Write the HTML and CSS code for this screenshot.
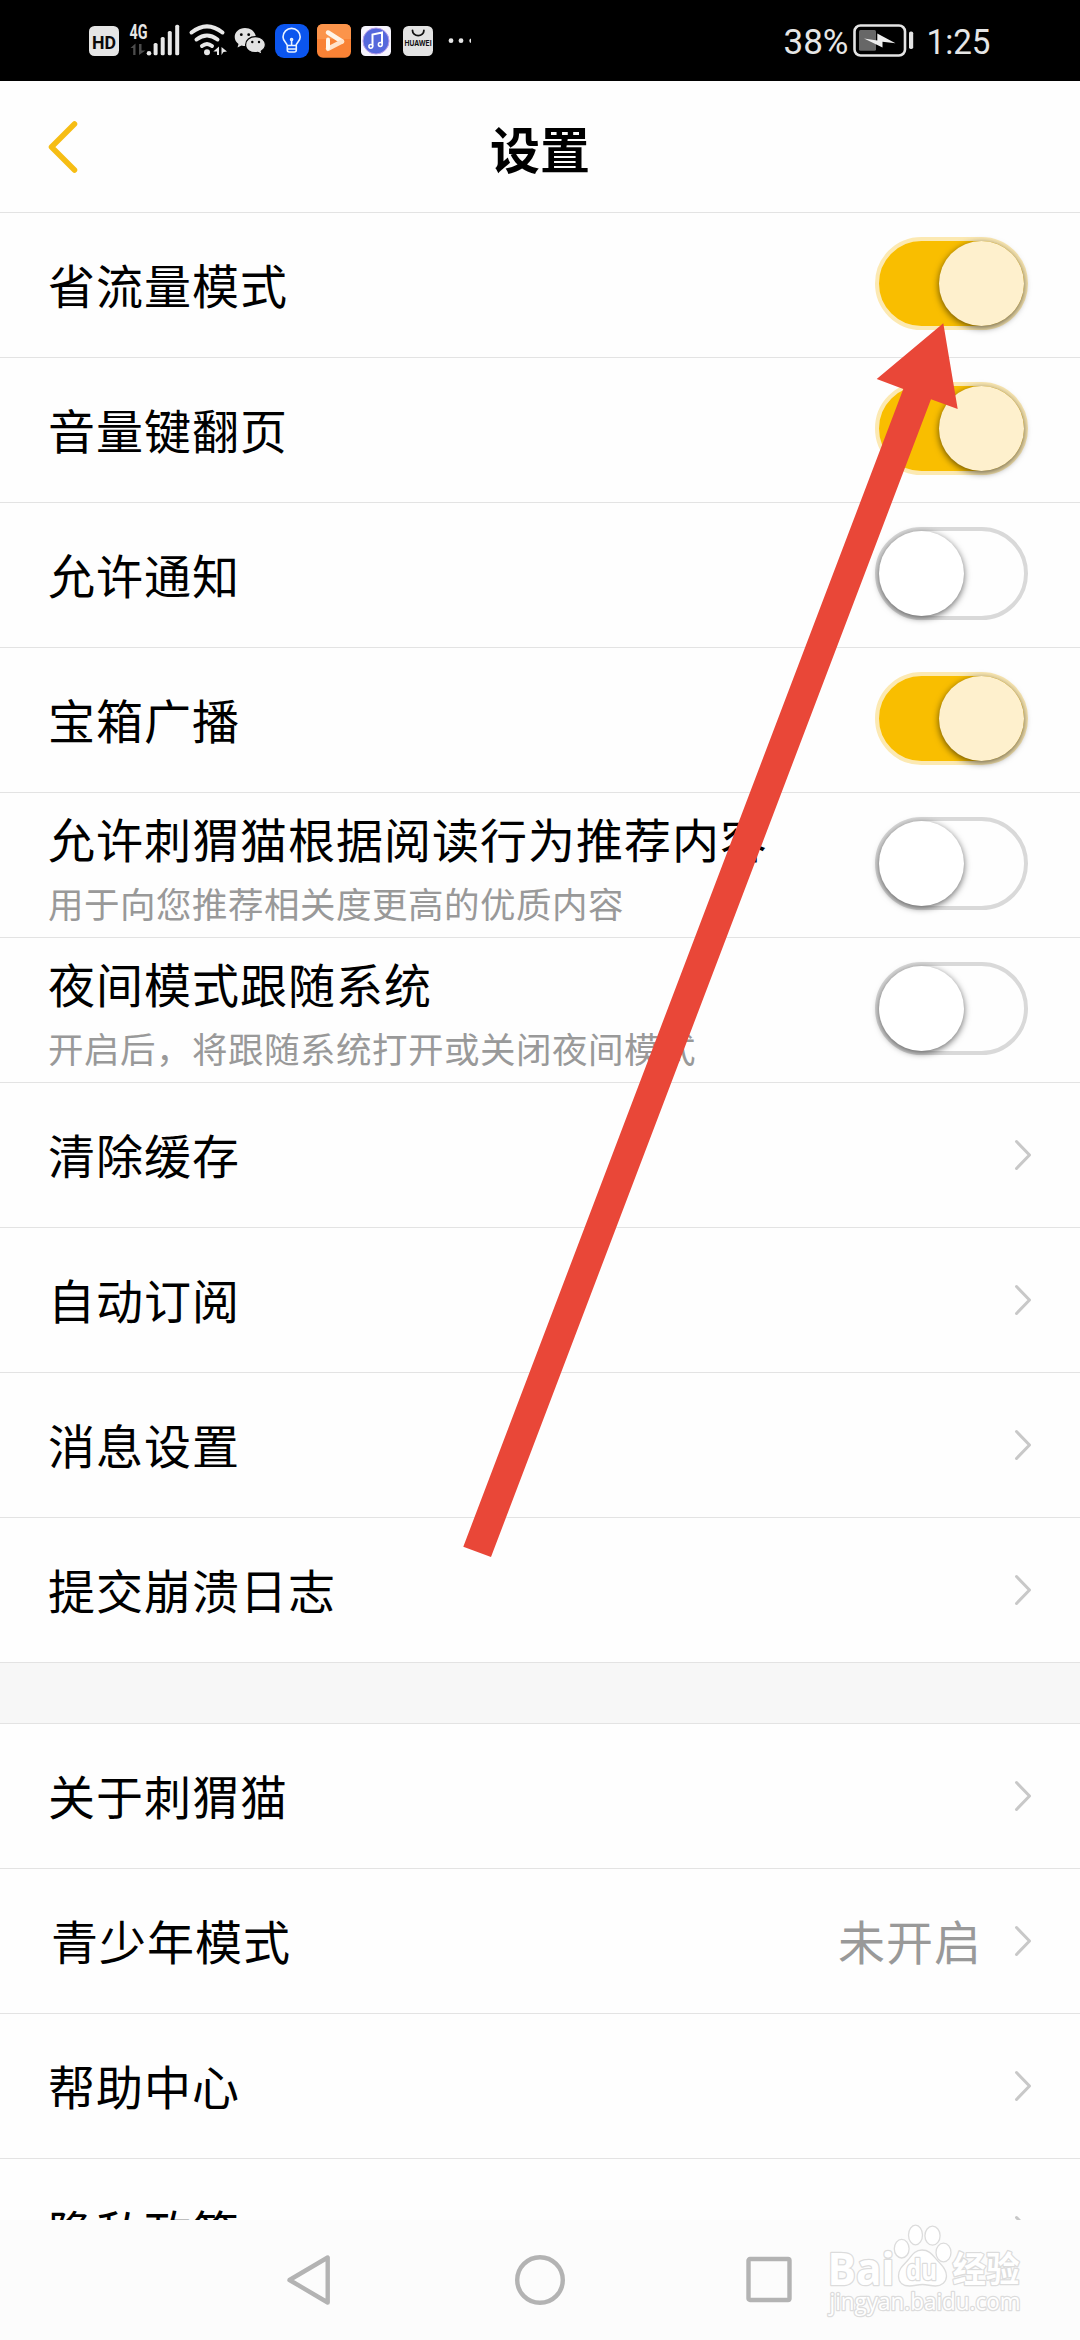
FILE: index.html
```html
<!DOCTYPE html>
<html lang="zh-CN">
<head>
<meta charset="utf-8">
<title>设置</title>
<link rel="stylesheet" href="styles.css">
</head>
<body>
<svg width="0" height="0" class="defs">
  <defs>
    <symbol id="chevron" viewBox="0 0 18 32"><path d="M2.5 2.500L15.500 16L2.500 29.500" fill="none" stroke="#c8c8c8" stroke-width="3" stroke-linecap="round" stroke-linejoin="round"/></symbol>
  </defs>
</svg>
<div class="screen">
  <div class="status">
    <svg class="status-icons" width="392" height="81" viewBox="80 0 392 81">
      <rect x="89" y="26" width="30" height="30" rx="5.500" fill="#e5e5e5"/>
      <text x="92" y="48.600" textLength="24" lengthAdjust="spacingAndGlyphs" class="hd">HD</text>
      <text x="129.500" y="38.700" textLength="18" lengthAdjust="spacingAndGlyphs" class="net">4G</text>
      <path d="M130.500 48L135.500 43.500V55H133.200V48ZM145.500 50.500L139 55V44H141.500V50.500Z" fill="#4c4c4c"/>
      <g fill="#e8e8e8">
        <circle cx="149" cy="53.200" r="2.300"/>
        <rect x="153.600" y="43" width="4" height="12.300" rx="1.600"/>
        <rect x="160.700" y="37" width="4" height="18.300" rx="1.600"/>
        <rect x="167.800" y="31" width="4" height="24.300" rx="1.600"/>
        <rect x="175.200" y="24.700" width="4" height="30.600" rx="1.600"/>
      </g>
      <g fill="none" stroke="#e8e8e8" stroke-width="4" stroke-linecap="round">
        <path d="M191.500 32.500Q207 20.200 222.500 32.500"/>
        <path d="M196.500 39.500Q207 31.500 217.500 39.500"/>
        <path d="M202 46Q207 42 212 46"/>
      </g>
      <circle cx="207" cy="52.300" r="3" fill="#e8e8e8"/>
      <path d="M213.300 51.500L219 46.500V55H217V51.500ZM221.500 55V47L227 51.500L223.500 52Z" fill="#e8e8e8"/>
      <path d="M245 28c-6 0-10.300 4-10.300 9 0 3 1.500 5.200 3.800 6.900l-1 3.600 4-2c3 .8 7 .8 10-.8 4-2 5.500-6 4-9.500-1-4-5-7.200-10.500-7.200Z" fill="#e2e2e2"/>
      <path d="M255.500 36.700c-5.800 0-9.900 3.600-9.900 8 0 5 5 9 12.200 7.700l4.200 1.800-.8-3c2.500-1.700 4.200-3.800 4.200-6.500 0-4.400-4.200-8-9.900-8Z" fill="#e2e2e2" stroke="#000" stroke-width="1.200"/>
      <g fill="#000"><circle cx="241.300" cy="34.700" r="1.400"/><circle cx="248.700" cy="34.700" r="1.400"/><circle cx="252.300" cy="42" r="1.200"/><circle cx="259" cy="42" r="1.200"/></g>
      <rect x="275" y="24" width="34" height="34" rx="9" fill="#0b55ee"/>
      <g fill="none" stroke="#e9f2ff" stroke-width="1.600" stroke-linecap="round" stroke-linejoin="round">
        <path d="M287.300 45.500C286.500 42.500 283 41 283 37a8 8 0 0 1 17.200 0c0 4-3.500 5.500-4.300 8.500ZM287.300 45.500v4.500q0 2 2 2h5q2 0 2-2v-4.500M287.500 49h8.500M291.600 40.500v5"/>
        <circle cx="291.600" cy="39.500" r="1"/>
      </g>
      <rect x="317" y="24" width="34" height="33.700" rx="6" fill="#f98235"/>
      <path d="M317 39V30q0-6 6-6h22q6 0 6 6v9Z" fill="#fb944b"/>
      <path d="M328 32.500L342 41.500" stroke="#fff4e8" stroke-width="4.500" stroke-linecap="round"/>
      <path d="M342 41.500L328 48.800" stroke="#ffe3ca" stroke-width="4.500" stroke-linecap="round"/>
      <path d="M328 39.500V48" stroke="#fff8ef" stroke-width="4"  stroke-linecap="round"/>
      <rect x="361" y="26" width="30" height="30" rx="4.500" fill="#f6f4fd"/>
      <circle cx="376" cy="41" r="13" fill="#5568dc" stroke="#b59bea" stroke-width="1"/>
      <path d="M372.500 46.500V34.500L382 32.500V44.500" fill="none" stroke="#fff" stroke-width="2"/>
      <circle cx="370.800" cy="46.300" r="1.900" fill="#5568dc" stroke="#fff" stroke-width="1.500"/><circle cx="380.300" cy="44.500" r="1.900" fill="#5568dc" stroke="#fff" stroke-width="1.500"/>
      <rect x="403" y="26" width="30" height="30" rx="5.500" fill="#e3e3e3"/>
      <path d="M412.500 30.500a5.700 5.200 0 0 0 11.400 0" fill="none" stroke="#111" stroke-width="1.800" stroke-linecap="round"/>
      <text x="404.500" y="46" textLength="27" lengthAdjust="spacingAndGlyphs" class="hw">HUAWEI</text>
      <g fill="#e5e5e5"><circle cx="451" cy="40.700" r="2.400"/><circle cx="461" cy="40.700" r="2.400"/><path d="M471 38.400a2.400 2.400 0 0 0 0 4.600Z"/></g>
    </svg>
    <svg class="status-right" width="212" height="81" viewBox="780 0 212 81">
      <text x="783.500" y="54" textLength="65" lengthAdjust="spacingAndGlyphs" class="clock">38%</text>
      <rect x="854.500" y="25.500" width="50.500" height="30" rx="6" fill="none" stroke="#e4e4e4" stroke-width="2.600"/>
      <rect x="859" y="30" width="17" height="20.800" rx="1.500" fill="#676767"/>
      <path d="M864 38.500L877.300 40.500V33.500L895.500 43.200L882.500 41.800V47.500Z" fill="#eee"/>
      <rect x="909" y="31.500" width="4.200" height="17.500" rx="1.800" fill="#e4e4e4"/>
      <text x="926.500" y="54" textLength="64" lengthAdjust="spacingAndGlyphs" class="clock">1:25</text>
    </svg>
  </div>

  <header class="header">
    <svg class="back" width="32" height="54" viewBox="0 0 32 54"><path d="M27.500 4L4.500 27L27.500 50" fill="none" stroke="#f6bd14" stroke-width="5.500" stroke-linecap="round" stroke-linejoin="round"/></svg>
    <h1 class="title">设置</h1>
  </header>

  <main class="list">
    <div class="row"><span class="label">省流量模式</span><span class="switch on"><i class="knob"></i></span></div>
    <div class="row"><span class="label">音量键翻页</span><span class="switch on"><i class="knob"></i></span></div>
    <div class="row"><span class="label">允许通知</span><span class="switch"><i class="knob"></i></span></div>
    <div class="row"><span class="label">宝箱广播</span><span class="switch on"><i class="knob"></i></span></div>
    <div class="row"><div class="stack"><span class="label">允许刺猬猫根据阅读行为推荐内容</span><span class="sub">用于向您推荐相关度更高的优质内容</span></div><span class="switch"><i class="knob"></i></span></div>
    <div class="row"><div class="stack"><span class="label">夜间模式跟随系统</span><span class="sub">开启后，将跟随系统打开或关闭夜间模式</span></div><span class="switch"><i class="knob"></i></span></div>
    <div class="row"><span class="label">清除缓存</span><svg class="chev"><use href="#chevron"/></svg></div>
    <div class="row"><span class="label">自动订阅</span><svg class="chev"><use href="#chevron"/></svg></div>
    <div class="row"><span class="label">消息设置</span><svg class="chev"><use href="#chevron"/></svg></div>
    <div class="row"><span class="label">提交崩溃日志</span><svg class="chev"><use href="#chevron"/></svg></div>
    <div class="gap"></div>
    <div class="row"><span class="label">关于刺猬猫</span><svg class="chev"><use href="#chevron"/></svg></div>
    <div class="row teen"><span class="label">青少年模式</span><span class="value">未开启</span><svg class="chev"><use href="#chevron"/></svg></div>
    <div class="row"><span class="label">帮助中心</span><svg class="chev"><use href="#chevron"/></svg></div>
    <div class="row"><span class="label">隐私政策</span><svg class="chev"><use href="#chevron"/></svg></div>
  </main>

  <nav class="nav">
    <svg width="50" height="54" viewBox="0 0 50 54"><path d="M41.700 4.500V49.500L3.500 27Z"/></svg>
    <svg width="50" height="54" viewBox="0 0 50 54"><circle cx="25" cy="27" r="22.800"/></svg>
    <svg width="50" height="54" viewBox="0 0 50 54"><rect x="4.500" y="6" width="41" height="41" rx="1.500"/></svg>
  </nav>

  <svg class="pointer" width="500" height="1240" viewBox="460 320 500 1240"><path d="M943.300 323.300L876.700 379L903.300 389L463.300 1546.700L491 1557L931 399.300L957.700 409Z" fill="#e94738"/></svg>

  <svg class="watermark" width="204" height="100" viewBox="824 2220 204 100">
    <g class="wm">
      <text x="827.500" y="2284.500" textLength="67" lengthAdjust="spacingAndGlyphs" class="wm-bai">Bai</text>
      <ellipse cx="901.700" cy="2248.700" rx="7.400" ry="9.300"/>
      <ellipse cx="915.500" cy="2235" rx="7" ry="9.800"/>
      <ellipse cx="932.500" cy="2235.700" rx="7.600" ry="9.500"/>
      <ellipse cx="943.500" cy="2252.500" rx="7.500" ry="9.300"/>
      <path d="M922 2250c-7 0-10 5-14 10-4 5-9.500 8-9.500 16 0 7 5 10 11 10 5 0 8-1.500 13-1.500s8 1.500 13 1.500c6 0 11-4 11-10 0-7-5-11-9-15.500-5-5.500-8-10.500-15.500-10.500Z"/>
      <text x="906" y="2279.500" textLength="31" lengthAdjust="spacingAndGlyphs" class="wm-du">du</text>
      <text x="952.500" y="2281.500" textLength="67" lengthAdjust="spacingAndGlyphs" class="wm-cn">经验</text>
      <text x="829.500" y="2310" textLength="191" lengthAdjust="spacingAndGlyphs" class="wm-url">jingyan.baidu.com</text>
    </g>
  </svg>
</div>
</body>
</html>
```
FILE: styles.css
```css
* { box-sizing: border-box; }
body {
  margin: 0;
  background: #fefefe;
  font-family: "Noto Sans CJK SC", sans-serif;
  color: #000;
}
.defs { position: absolute; }
.screen {
  position: relative;
  width: 1080px;
  height: 2340px;
  display: flex;
  flex-direction: column;
  overflow: hidden;
}
.status {
  height: 81px;
  flex: none;
  background: #000;
  display: flex;
  justify-content: space-between;
  padding: 0 88px 0 80px;
}
.status text { fill: #e6e6e6; }
.status .hd { font: 700 19px "Roboto", sans-serif; fill: #0a0a0a; }
.status .net { font: 700 19.5px "Roboto", sans-serif; }
.status .hw { font: 700 7.5px "Inter", sans-serif; fill: #111; }
.status .clock { font: 400 35px "Roboto", sans-serif; }

.header {
  flex: none;
  height: 132px;
  display: grid;
  grid-template-columns: 1fr auto 1fr;
  align-items: center;
  padding: 0 47px;
  border-bottom: 1px solid #e3e3e3;
}
.back { display: block; }
.title {
  margin: 1px 0 0;
  font-size: 50px;
  line-height: 72px;
  font-weight: 700;
}
.list { flex: 1; min-height: 0; overflow: hidden; }
.row {
  height: 145px;
  display: flex;
  align-items: center;
  padding: 0 48px;
  border-bottom: 1px solid #e3e3e3;
}
.label {
  flex: 1;
  padding-bottom: 3px;
  font-size: 47px;
  line-height: 70px;
  letter-spacing: 1px;
  white-space: nowrap;
}
.stack { flex: 1; display: flex; flex-direction: column; padding-top: 3px; }
.stack .label { flex: none; }
.sub { font-size: 35.5px; line-height: 54px; letter-spacing: .5px; color: #999; white-space: nowrap; }
.teen { padding-left: 51px; }
.value {
  padding-bottom: 3px;
  font-size: 47px;
  line-height: 70px;
  letter-spacing: 1px;
  color: #999;
  margin-right: 32px;
}
.chev { width: 18px; height: 32px; flex: none; }
.gap { height: 61px; background: #f7f7f7; border-bottom: 1px solid #e3e3e3; }

.switch {
  flex: none;
  display: flex;
  width: 153px;
  height: 93px;
  margin: 0 4px 3px 0;
  border: 4px solid #d9d9d9;
  border-radius: 47px;
}
.switch.on {
  justify-content: flex-end;
  background: #f9be00;
  border-color: #fce9b2;
}
.knob {
  width: 85px;
  height: 85px;
  border-radius: 50%;
  background: #fff;
  box-shadow: 0 2px 7px rgba(0, 0, 0, .6);
}
.on .knob { background: #fef0cd; }

.nav {
  flex: none;
  height: 120px;
  background: #fcfcfc;
  display: flex;
  justify-content: space-between;
  align-items: center;
  padding: 0 286px;
}
.nav svg { fill: none; stroke: #b3b3b3; stroke-width: 4.4; stroke-linejoin: round; }

.pointer { position: absolute; left: 460px; top: 320px; }
.watermark { position: absolute; left: 824px; top: 2220px; }
.wm { fill: #fff; stroke: #dcdcdc; stroke-width: 1.3; }
.wm text { paint-order: stroke; stroke-width: 2.6; stroke-linejoin: round; }
.wm-bai { font: 700 45px "Open Sans", sans-serif; }
.wm-du { font: 700 28px "Open Sans", sans-serif; }
.wm-cn { font: 700 35px "Noto Sans CJK SC", sans-serif; }
.wm-url { font: 400 23px "Open Sans", sans-serif; }
```
